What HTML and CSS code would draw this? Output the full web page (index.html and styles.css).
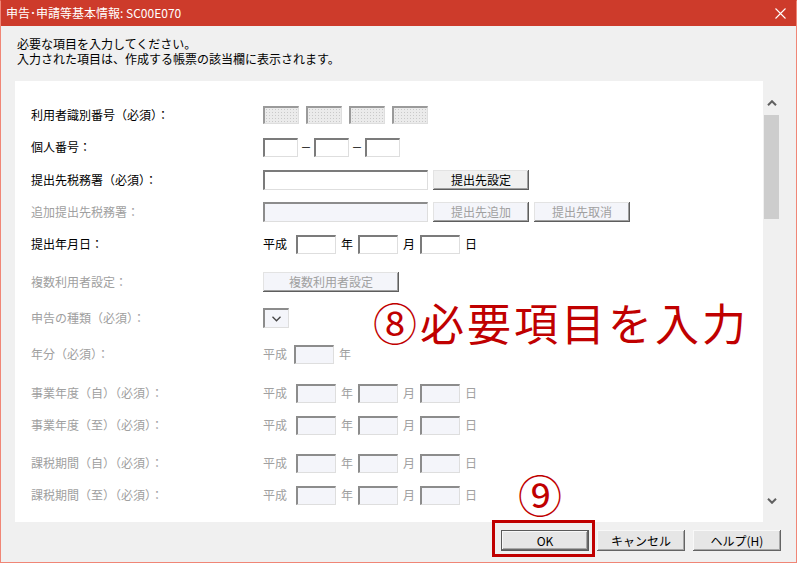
FILE: index.html
```html
<!DOCTYPE html>
<html lang="ja">
<head>
    <meta charset="UTF-8">
    <title>申告･申請等基本情報: SC00E070</title>
    <link rel="stylesheet" href="styles.css">
</head>
<body>
    <div class="window">
        <div class="titlebar">
            <span class="title">申告･申請等基本情報: SC00E070</span>
            <svg class="close" width="11" height="11" viewBox="0 0 11 11">
                <path d="M0.5 0.5 L10.5 10.5 M10.5 0.5 L0.5 10.5" stroke="#fff" stroke-width="1.1" fill="none"/>
            </svg>
        </div>

        <div class="intro">
            <p>必要な項目を入力してください。</p>
            <p>入力された項目は、作成する帳票の該当欄に表示されます。</p>
        </div>

        <div class="main">
            <div class="panel">
                <div class="row">
                    <span class="label">利用者識別番号（必須）：</span>
                    <div class="controls gap7">
                        <span class="field code"></span>
                        <span class="field code"></span>
                        <span class="field code"></span>
                        <span class="field code"></span>
                    </div>
                </div>

                <div class="row">
                    <span class="label">個人番号：</span>
                    <div class="controls">
                        <input class="field small" type="text">
                        <span class="dash">－</span>
                        <input class="field small" type="text">
                        <span class="dash">－</span>
                        <input class="field small" type="text">
                    </div>
                </div>

                <div class="row sp1">
                    <span class="label">提出先税務署（必須）：</span>
                    <div class="controls gap5">
                        <input class="field wide" type="text">
                        <button class="btn">提出先設定</button>
                    </div>
                </div>

                <div class="row off">
                    <span class="label">追加提出先税務署：</span>
                    <div class="controls gap5">
                        <input class="field wide" type="text" disabled>
                        <button class="btn" disabled>提出先追加</button>
                        <button class="btn" disabled>提出先取消</button>
                    </div>
                </div>

                <div class="row">
                    <span class="label">提出年月日：</span>
                    <div class="controls date">
                        <span class="era">平成</span>
                        <input class="field num" type="text">
                        <span>年</span>
                        <input class="field num" type="text">
                        <span>月</span>
                        <input class="field num" type="text">
                        <span>日</span>
                    </div>
                </div>

                <div class="row off sp6">
                    <span class="label">複数利用者設定：</span>
                    <div class="controls">
                        <button class="btn long" disabled>複数利用者設定</button>
                    </div>
                </div>

                <div class="row off sp4">
                    <span class="label">申告の種類（必須）：</span>
                    <div class="controls">
                        <span class="field select">
                            <svg width="9" height="6" viewBox="0 0 9 6">
                                <polyline points="0.5,0.8 4.5,4.8 8.5,0.8" fill="none" stroke="#444" stroke-width="1.3"/>
                            </svg>
                        </span>
                    </div>
                </div>

                <div class="row off sp4">
                    <span class="label">年分（必須）：</span>
                    <div class="controls date">
                        <span class="era short">平成</span>
                        <input class="field num" type="text" disabled>
                        <span>年</span>
                    </div>
                </div>

                <div class="row off sp7">
                    <span class="label">事業年度（自）（必須）：</span>
                    <div class="controls date">
                        <span class="era">平成</span>
                        <input class="field num" type="text" disabled>
                        <span>年</span>
                        <input class="field num" type="text" disabled>
                        <span>月</span>
                        <input class="field num" type="text" disabled>
                        <span>日</span>
                    </div>
                </div>

                <div class="row off">
                    <span class="label">事業年度（至）（必須）：</span>
                    <div class="controls date">
                        <span class="era">平成</span>
                        <input class="field num" type="text" disabled>
                        <span>年</span>
                        <input class="field num" type="text" disabled>
                        <span>月</span>
                        <input class="field num" type="text" disabled>
                        <span>日</span>
                    </div>
                </div>

                <div class="row off sp6">
                    <span class="label">課税期間（自）（必須）：</span>
                    <div class="controls date">
                        <span class="era">平成</span>
                        <input class="field num" type="text" disabled>
                        <span>年</span>
                        <input class="field num" type="text" disabled>
                        <span>月</span>
                        <input class="field num" type="text" disabled>
                        <span>日</span>
                    </div>
                </div>

                <div class="row off">
                    <span class="label">課税期間（至）（必須）：</span>
                    <div class="controls date">
                        <span class="era">平成</span>
                        <input class="field num" type="text" disabled>
                        <span>年</span>
                        <input class="field num" type="text" disabled>
                        <span>月</span>
                        <input class="field num" type="text" disabled>
                        <span>日</span>
                    </div>
                </div>
            </div>

            <div class="scrollbar">
                <div class="arrow">
                    <svg width="10" height="6" viewBox="0 0 10 6">
                        <polyline points="1,5.2 5,1.2 9,5.2" fill="none" stroke="#606060" stroke-width="2"/>
                    </svg>
                </div>
                <div class="thumb"></div>
                <div class="track"></div>
                <div class="arrow">
                    <svg width="10" height="6" viewBox="0 0 10 6">
                        <polyline points="1,0.8 5,4.8 9,0.8" fill="none" stroke="#606060" stroke-width="2"/>
                    </svg>
                </div>
            </div>
        </div>

        <div class="footer">
            <button class="btn dlg default">OK</button>
            <button class="btn dlg">キャンセル</button>
            <button class="btn dlg">ヘルプ(H)</button>
        </div>

        <!-- annotations drawn over the dialog -->
        <div class="note note-input">⑧必要項目を入力</div>
        <div class="note note-ok">⑨</div>
        <div class="mark-ok"></div>
    </div>
</body>
</html>
```

FILE: styles.css
```css
* {
    box-sizing: border-box;
    margin: 0;
    padding: 0;
}

body {
    font-family: "Noto Sans CJK JP", "Noto Sans", sans-serif;
    font-size: 12px;
    color: #000;
    background: #fff;
}

.window {
    position: relative;
    width: 797px;
    height: 563px;
    background: #f0f0f0;
    border: 1px solid #f08676;
    border-top-color: #cd3b2b;
    display: flex;
    flex-direction: column;
}

.titlebar {
    height: 25px;
    flex-shrink: 0;
    background: #cd3b2b;
    color: #fff;
    display: flex;
    align-items: center;
    justify-content: space-between;
    padding: 0 10px 1px 5px;
}

.title {
    font-size: 12px;
    line-height: 14px;
}

.intro {
    height: 55px;
    flex-shrink: 0;
    padding: 10px 0 0 16px;
    line-height: 15px;
}

.main {
    height: 441px;
    flex-shrink: 0;
    display: flex;
}

.panel {
    width: 748px;
    margin-left: 14px;
    background: #fff;
    padding: 18px 0 0 16px;
    overflow: hidden;
}

/* form rows */
.row {
    display: grid;
    grid-template-columns: 232px auto;
    align-items: center;
    height: 32px;
}

.row.sp1 { margin-top: 1px; }
.row.sp4 { margin-top: 4px; }
.row.sp6 { margin-top: 6px; }
.row.sp7 { margin-top: 7px; }

.row.off,
.row.off .btn {
    color: #a0a0a0;
}

.label {
    white-space: nowrap;
    line-height: 14px;
}

.controls {
    display: flex;
    align-items: center;
    line-height: 14px;
}

.controls.gap7 { gap: 7px; }
.controls.gap5 { gap: 5px; }
.controls.date { gap: 5px; }

.era {
    width: 24px;
    margin-right: 4px;
    white-space: nowrap;
}

.era.short {
    margin-right: 2px;
}

.dash {
    width: 16px;
    text-align: center;
    font-size: 11px;
}

/* sunken edit boxes */
.field {
    display: block;
    height: 19px;
    background: #fff;
    border-top: 2px solid #7b7b7b;
    border-left: 2px solid #7b7b7b;
    border-right: 1px solid #dedede;
    border-bottom: 1px solid #dedede;
    font: inherit;
    outline: none;
}

.field:disabled,
.row.off .field {
    background: #f4f5fa;
    border-top-color: #8c8c8c;
    border-left-color: #8c8c8c;
}

.field.code {
    width: 36px;
    height: 18px;
    background-color: #ebebeb;
    background-image: radial-gradient(#c9c9c9 0.7px, transparent 1px);
    background-size: 3px 3px;
    background-position: 6px 3px;
    border-top-color: #9a9a9a;
    border-left-color: #9a9a9a;
}

.field.small { width: 35px; }
.field.wide { width: 165px; height: 20px; }
.field.num { width: 40px; }

.field.select {
    width: 26px;
    height: 20px;
    background: #fafafa;
    display: flex;
    align-items: center;
    justify-content: center;
    padding-right: 1px;
}

/* raised buttons */
.btn {
    height: 20px;
    width: 96px;
    font: inherit;
    line-height: 14px;
    color: #000;
    background: #f0f0f0;
    border: none;
    box-shadow: inset -1px -1px #5e5e5e, inset 1px 1px #e3e3e3, inset -2px -2px #a0a0a0;
    cursor: pointer;
}

.btn:disabled {
    background: #f4f5fa;
    cursor: default;
}

.btn.long { width: 136px; }

.footer {
    flex: 1;
    display: flex;
    justify-content: flex-end;
    gap: 8px;
    padding: 8px 15px 0 0;
}

.btn.dlg {
    width: 88px;
    height: 21px;
    background: #e6e6e6;
    box-shadow: inset -1px -1px #646464, inset 1px 1px #f8f8f8, inset -2px -2px #a8a8a8;
}

.btn.dlg.default {
    box-shadow: inset 0 0 0 1px #5a5a5a, inset -2px -2px #6a6a6a, inset 2px 2px #f8f8f8, inset -3px -3px #a8a8a8;
}

/* scrollbar */
.scrollbar {
    width: 17px;
    display: flex;
    flex-direction: column;
    padding: 13px 1px;
}

.arrow {
    height: 17px;
    display: flex;
    align-items: center;
    justify-content: center;
}

.thumb {
    margin-top: 4px;
    height: 104px;
    background: #cdcdcd;
}

.track {
    flex: 1;
}

/* red annotations */
.note {
    position: absolute;
    color: #c00000;
    line-height: 1;
    white-space: nowrap;
    font-weight: 400;
}

.note-input {
    left: 372px;
    top: 299px;
    font-size: 44px;
    letter-spacing: 3px;
}

.note-ok {
    left: 517px;
    top: 471px;
    font-size: 44px;
}

.mark-ok {
    position: absolute;
    left: 491px;
    top: 519px;
    width: 103px;
    height: 37px;
    border: 3px solid #c00000;
}
```
